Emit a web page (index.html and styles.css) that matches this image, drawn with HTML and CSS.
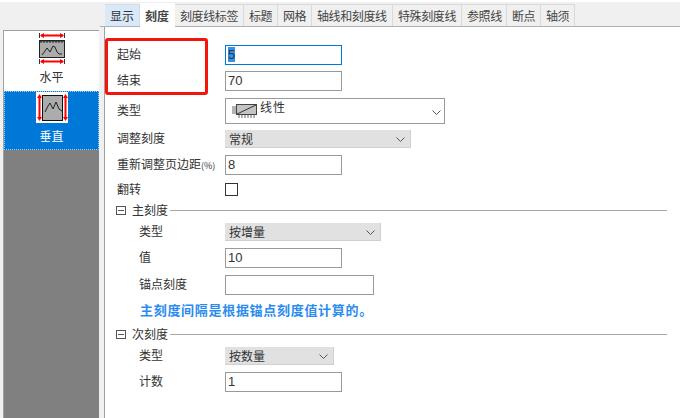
FILE: index.html
```html
<!DOCTYPE html>
<html lang="en">
<head>
    <meta charset="UTF-8">
    <title>刻度</title>
    <link rel="stylesheet" href="styles.css">
</head>
<body>
    <div class="dialog">
        <div class="sidebar">
            <div class="side-item">
                <svg class="side-icon" width="32" height="33" viewBox="0 0 32 33">
                    <rect x="3.500" y="7.500" width="25" height="17" fill="#acacac" stroke="#222"/>
                    <path d="M4 8h24M5 8v2M8 8v2M11 8v2M14 8v2M17 8v2M20 8v2M23 8v2M26 8v2" stroke="#222" fill="none"/>
                    <path d="M6 22l3-4 2-3 3 4 3-6 2 1 2 5 2 2h3" stroke="#222" fill="none"/>
                    <path d="M5 2.500h22M5 28.500h22" stroke="#f00" stroke-width="2"/>
                    <path d="M4 2.500l4-2.500v5zM28 2.500l-4-2.500v5zM4 28.500l4-2.500v5zM28 28.500l-4-2.500v5z" fill="#f00"/>
                    <path d="M3.500 0v5M28.500 0v5M3.500 26v5M28.500 26v5" stroke="#333"/>
                </svg>
                <span class="side-label">水平</span>
            </div>
            <div class="side-item side-active">
                <svg class="side-icon" width="32" height="31" viewBox="0 0 32 31">
                    <rect width="32" height="31" fill="#fff"/>
                    <rect x="6.500" y="3.500" width="20" height="25" fill="#acacac" stroke="#111"/>
                    <path d="M9 20l3-6 2-3 3 6 3-7 3 7 3 2" stroke="#222" fill="none"/>
                    <path d="M3.500 4v23M29.500 4v23" stroke="#f00" stroke-width="2"/>
                    <path d="M3.500 2l-2.500 4h5zM3.500 29l-2.500-4h5zM29.500 2l-2.500 4h5zM29.500 29l-2.500-4h5z" fill="#f00"/>
                </svg>
                <span class="side-label">垂直</span>
            </div>
            <div class="side-empty"></div>
        </div>

        <div class="main">
            <div class="tabs">
                <div class="tab tab-hover">显示</div>
                <div class="tab tab-active">刻度</div>
                <div class="tab">刻度线标签</div>
                <div class="tab">标题</div>
                <div class="tab">网格</div>
                <div class="tab">轴线和刻度线</div>
                <div class="tab">特殊刻度线</div>
                <div class="tab">参照线</div>
                <div class="tab">断点</div>
                <div class="tab">轴须</div>
            </div>

            <div class="form">
                <div class="row">
                    <label class="label">起始</label>
                    <div class="input input-focus"><span class="selected">5</span></div>
                </div>
                <div class="row">
                    <label class="label">结束</label>
                    <div class="input">70</div>
                </div>
                <div class="row">
                    <label class="label">类型</label>
                    <div class="picker">
                        <svg width="26" height="16" viewBox="0 0 26 16">
                            <rect x="4.500" y="1.500" width="20" height="10" fill="#c4c4c4" stroke="#444"/>
                            <path d="M5 11L24 2" stroke="#333" fill="none"/>
                            <path d="M0 4h4M0 6h4M0 8h4M0 10h4M7 12v3M10 12v3M13 12v3M16 12v3M19 12v3M22 12v3" stroke="#666" fill="none"/>
                        </svg>
                        <span class="picker-text">线性</span>
                        <svg class="chevron" width="9" height="5" viewBox="0 0 9 5"><path d="M.5.500l4 4 4-4" fill="none" stroke="#555"/></svg>
                    </div>
                </div>
                <div class="row">
                    <label class="label">调整刻度</label>
                    <div class="select select-186">常规
                        <svg class="chevron" width="9" height="5" viewBox="0 0 9 5"><path d="M.5.500l4 4 4-4" fill="none" stroke="#555"/></svg>
                    </div>
                </div>
                <div class="row">
                    <label class="label">重新调整页边距<span class="percent">(%)</span></label>
                    <div class="input">8</div>
                </div>
                <div class="row">
                    <label class="label">翻转</label>
                    <div class="checkbox"></div>
                </div>
                <div class="section">
                    <span class="collapse"></span>
                    <span class="section-title">主刻度</span>
                    <span class="section-line"></span>
                </div>
                <div class="row row-sub">
                    <label class="label">类型</label>
                    <div class="select select-156">按增量
                        <svg class="chevron" width="9" height="5" viewBox="0 0 9 5"><path d="M.5.500l4 4 4-4" fill="none" stroke="#555"/></svg>
                    </div>
                </div>
                <div class="row row-sub">
                    <label class="label">值</label>
                    <div class="input">10</div>
                </div>
                <div class="row row-sub">
                    <label class="label">锚点刻度</label>
                    <div class="input input-wide"></div>
                </div>
                <div class="row row-sub">
                    <div class="note">主刻度间隔是根据锚点刻度值计算的。</div>
                </div>
                <div class="section">
                    <span class="collapse"></span>
                    <span class="section-title">次刻度</span>
                    <span class="section-line"></span>
                </div>
                <div class="row row-sub">
                    <label class="label">类型</label>
                    <div class="select select-109">按数量
                        <svg class="chevron" width="9" height="5" viewBox="0 0 9 5"><path d="M.5.500l4 4 4-4" fill="none" stroke="#555"/></svg>
                    </div>
                </div>
                <div class="row row-sub">
                    <label class="label">计数</label>
                    <div class="input">1</div>
                </div>
            </div>

            <div class="highlight"></div>
        </div>
    </div>
</body>
</html>
```

FILE: styles.css
```css
* {
    margin: 0;
    padding: 0;
    box-sizing: border-box;
}

body {
    width: 680px;
    height: 418px;
    overflow: hidden;
    background-color: #fff;
    font-family: "Noto Sans CJK SC", "Liberation Sans", sans-serif;
    font-size: 12px;
    color: #333;
}

.dialog {
    height: 416px;
    margin-top: 2px;
    display: flex;
    background-color: #f0f0f0;
}

/* left list */
.sidebar {
    width: 96px;
    margin: 28px 1px 0 3px;
    display: flex;
    flex-direction: column;
    border-top: 1px solid #a0a0a0;
    border-left: 1px solid #a0a0a0;
    background-color: #fff;
}

.side-item {
    height: 60px;
    display: flex;
    flex-direction: column;
    align-items: center;
    padding-top: 2px;
}

.side-icon {
    display: block;
}

.side-label {
    margin-top: 2px;
    line-height: 17px;
}

.side-active {
    height: 59px;
    padding-top: 1px;
    background-color: #0078d7;
    outline: 1px dotted #a8d0f0;
    outline-offset: -1px;
    color: #fff;
}

.side-active .side-label {
    margin-top: 4px;
}

.side-empty {
    flex: 1;
    background-color: #808080;
}

/* tabs + page */
.main {
    position: relative;
    flex: 1;
    display: flex;
    flex-direction: column;
    padding-left: 4px;
}

.tabs {
    height: 25px;
    display: flex;
    align-items: flex-end;
    margin-left: -4px;
    padding-left: 5px;
    border-bottom: 1px solid #b0b0b0;
}

.tab {
    height: 22px;
    padding: 0 5px;
    line-height: 21px;
    background-color: #f0f0f0;
    border: 1px solid #d9d9d9;
    border-left: 0;
    border-bottom: 0;
    color: #444;
    white-space: nowrap;
    letter-spacing: -.4px;
}

.tab-hover {
    width: 35px;
    background-color: #d8eafa;
    color: #333;
    letter-spacing: 0;
}

.tab-active {
    height: 24px;
    width: 35px;
    margin-bottom: -1px;
    background-color: #fff;
    font-weight: 700;
    line-height: 25px;
    border: 0;
    letter-spacing: 0;
}

.tab:nth-child(3) { width: 69px; }
.tab:nth-child(4) { width: 34px; }
.tab:nth-child(5) { width: 34px; }
.tab:nth-child(6) { width: 81px; }
.tab:nth-child(7) { width: 69px; }
.tab:nth-child(8) { width: 45px; }
.tab:nth-child(9) { width: 34px; }
.tab:nth-child(10) { width: 34px; }

.form {
    flex: 1;
    display: grid;
    grid-template-rows: 26px 26px 34px 22px 30px 19px 22px 22px 29px 25px 24px 26px 18px 34px;
    align-content: start;
    padding: 15px 0 0 12px;
    background-color: #fff;
    border-left: 1px solid #a0a0a0;
}

.row {
    display: flex;
    align-items: center;
}

.label {
    width: 108px;
    flex-shrink: 0;
    padding-bottom: 3px;
    white-space: nowrap;
}

.percent {
    font-size: 9px;
}

.row-sub {
    padding-left: 22px;
}

.row-sub .label {
    width: 86px;
}

.input {
    width: 117px;
    height: 20px;
    padding-left: 2px;
    border: 1px solid #9a9a9a;
    background-color: #fff;
    font-family: "Liberation Sans", sans-serif;
    font-size: 13px;
    line-height: 18px;
}

.input-focus {
    border-color: #0078d7;
}

.input-wide {
    width: 149px;
}

.selected {
    display: inline-block;
    height: 15px;
    line-height: 15px;
    background-color: #3b8fe0;
    color: #1c3a5a;
}

.picker {
    position: relative;
    width: 220px;
    height: 26px;
    display: flex;
    align-items: flex-start;
    padding: 4px 0 0 6px;
    border: 1px solid #9a9a9a;
}

.picker-text {
    margin: -5px 0 0 2px;
    line-height: 17px;
    letter-spacing: 1px;
}

.select {
    position: relative;
    height: 18px;
    padding-left: 4px;
    line-height: 18px;
    background-color: #e1e1e1;
    border-right: 1px solid #d0d0d0;
    border-bottom: 1px solid #d0d0d0;
}

.select-186 { width: 186px; }
.select-156 { width: 156px; }
.select-109 { width: 109px; }

.chevron {
    position: absolute;
    right: 5px;
    top: 7px;
}

.picker .chevron {
    top: 11px;
    right: 3px;
}

.checkbox {
    width: 13px;
    height: 13px;
    border: 1px solid #333;
    background-color: #fff;
}

.section {
    display: flex;
    align-items: center;
    margin-left: -1px;
}

.collapse {
    position: relative;
    width: 10px;
    height: 9px;
    border: 1px solid #555;
}

.collapse::after {
    content: "";
    position: absolute;
    left: 1px;
    right: 1px;
    top: 3px;
    height: 1px;
    background-color: #555;
}

.section-title {
    margin-left: 6px;
    padding-bottom: 2px;
}

.section-line {
    width: 497px;
    height: 1px;
    margin-left: 2px;
    background-color: #a8a8a8;
}

.note {
    margin-left: 1px;
    color: #2b8cf0;
    font-size: 13px;
    font-weight: 700;
    letter-spacing: .7px;
}

/* red annotation drawn over the screenshot */
.highlight {
    position: absolute;
    left: 5px;
    top: 36px;
    width: 103px;
    height: 57px;
    border: 3px solid #f5140a;
    border-radius: 3px;
}
```
